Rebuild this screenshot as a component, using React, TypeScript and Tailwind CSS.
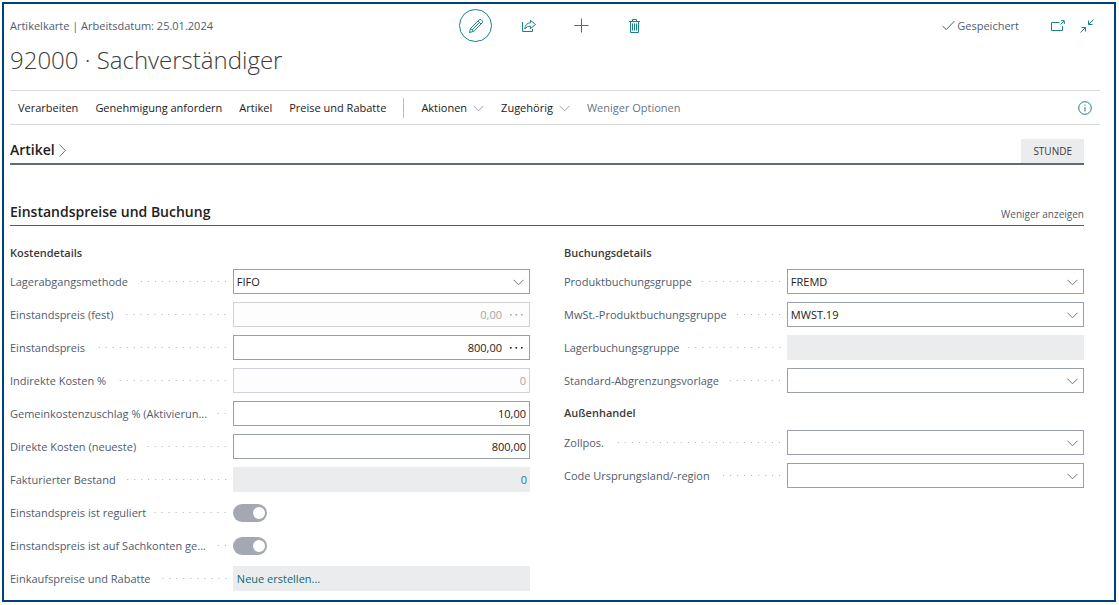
import type { ReactNode } from "react";

type Variant = "edit" | "disabled" | "readonly";

function ChevronDown({ className = "" }: { className?: string }) {
  return (
    <svg
      className={className}
      width="11"
      height="7"
      viewBox="0 0 11 7"
      fill="none"
      stroke="currentColor"
      aria-hidden="true"
    >
      <path d="M0.5 0.8 5.5 5.8 10.5 0.8" />
    </svg>
  );
}

function IconButton({
  label,
  round = false,
  children,
}: {
  label: string;
  round?: boolean;
  children: ReactNode;
}) {
  return (
    <button
      type="button"
      aria-label={label}
      className={
        round
          ? "flex size-[33px] items-center justify-center rounded-full border border-[#1b8085]"
          : "flex size-[33px] items-center justify-center"
      }
    >
      {children}
    </button>
  );
}

function Row({
  id,
  label,
  children,
}: {
  id: string;
  label: string;
  children: ReactNode;
}) {
  return (
    <div className="grid h-[25px] grid-cols-[3fr_4fr] items-center">
      <div className="flex min-w-0 items-center pr-1">
        <label htmlFor={id} className="whitespace-nowrap pr-2 text-[#505c6d]">
          {label}
        </label>
        <span className="h-px flex-1 bg-[linear-gradient(to_right,transparent_3px,#a8aeb8_3px,#a8aeb8_4px,transparent_4px)] bg-[length:7px_1px] bg-right bg-repeat-x" />
      </div>
      {children}
    </div>
  );
}

const boxStyles: Record<Variant, string> = {
  edit: "border border-[#9a9fac] bg-white text-[#212121]",
  disabled: "border border-[#cfd2d8] bg-[#fdfdfd] text-[#a6a6a6]",
  readonly: "bg-[#ebecee] text-[#1b8085]",
};

function ValueField({
  id,
  label,
  value,
  variant = "edit",
  assist = false,
}: {
  id: string;
  label: string;
  value: string;
  variant?: Variant;
  assist?: boolean;
}) {
  return (
    <Row id={id} label={label}>
      <div className={`flex h-full items-center ${boxStyles[variant]}`}>
        <input
          id={id}
          defaultValue={value}
          disabled={variant === "disabled"}
          readOnly={variant === "readonly"}
          className="h-full w-full min-w-0 flex-1 bg-transparent px-[3px] text-right outline-none"
        />
        {assist && (
          <button
            type="button"
            aria-label={`${label} bearbeiten`}
            disabled={variant === "disabled"}
            className="flex h-full w-6 items-center justify-center pr-0.5"
          >
            <svg width="13" height="2" viewBox="0 0 13 2" fill="currentColor" aria-hidden="true">
              <rect x="0" width="1.6" height="1.6" />
              <rect x="5.5" width="1.6" height="1.6" />
              <rect x="11" width="1.6" height="1.6" />
            </svg>
          </button>
        )}
      </div>
    </Row>
  );
}

function SelectField({ id, label, value = "" }: { id: string; label: string; value?: string }) {
  return (
    <Row id={id} label={label}>
      <div className="relative h-full">
        <select
          id={id}
          defaultValue={value}
          className="h-full w-full appearance-none border border-[#9a9fac] bg-white px-[3px] text-[#212121] outline-none"
        >
          <option value={value}>{value}</option>
        </select>
        <ChevronDown className="pointer-events-none absolute top-[10px] right-[6px] text-[#73767e]" />
      </div>
    </Row>
  );
}

function ToggleField({ id, label }: { id: string; label: string }) {
  return (
    <Row id={id} label={label}>
      <div className="relative h-[18px] w-[34px]">
        <input
          id={id}
          type="checkbox"
          role="switch"
          defaultChecked
          disabled
          className="peer size-full appearance-none rounded-full bg-[#a3a8b3]"
        />
        <span className="pointer-events-none absolute top-[3px] left-[3px] size-3 rounded-full bg-white peer-checked:left-5" />
      </div>
    </Row>
  );
}

function PageHeader() {
  return (
    <header>
      <div className="grid grid-cols-[1fr_auto_1fr] items-center pt-[5px]">
        <p className="text-[#505c6d]">Artikelkarte | Arbeitsdatum: 25.01.2024</p>

        <div className="flex gap-5 text-[#1b8085]">
          <IconButton label="Bearbeiten" round>
            <svg width="16" height="16" viewBox="0 0 16 16" fill="none" stroke="currentColor">
              <path d="M1.5 14.5 2.6 10.4 11.2 1.8Q12.2.8 13.3 1.8L14.2 2.7Q15.2 3.8 14.2 4.8L5.6 13.4ZM2.6 10.4 5.6 13.4M10 3 13 6M4.1 11.9 11.5 4.5" />
            </svg>
          </IconButton>
          <IconButton label="Teilen">
            <svg width="16" height="16" viewBox="0 0 16 16" fill="none" stroke="currentColor">
              <path d="M1.5 4V13.5H11.5V11" />
              <path d="M9.5 2.3 14.5 6.5 9.5 10.5V8.2C7 8.2 5.3 9 3.8 11 4 7.5 6 4.9 9.5 4.7Z" />
            </svg>
          </IconButton>
          <IconButton label="Neu">
            <svg width="15" height="15" viewBox="0 0 15 15" fill="none" stroke="currentColor">
              <path d="M7.5 0.5V14.5M0.5 7.5H14.5" />
            </svg>
          </IconButton>
          <IconButton label="Löschen">
            <svg width="13" height="16" viewBox="0 0 13 16" fill="none" stroke="currentColor">
              <path d="M1 3.5H12M4.5 3.5V1.5H8.5V3.5M2.5 3.5V14.5H10.5V3.5M4.5 5.5V12.5M6.5 5.5V12.5M8.5 5.5V12.5" />
            </svg>
          </IconButton>
        </div>

        <div className="flex items-center justify-end pr-1.5 text-[#1b8085]">
          <span className="flex items-center gap-0.5 text-[#505c6d]">
            <svg width="13" height="11" viewBox="0 0 13 11" fill="none" stroke="currentColor" aria-hidden="true">
              <path d="M0.5 6 4.3 9.5 12.5 1" />
            </svg>
            Gespeichert
          </span>
          <button type="button" aria-label="In neuem Fenster öffnen" className="ml-8">
            <svg width="14" height="12" viewBox="0 0 14 12" fill="none" stroke="currentColor">
              <path d="M8.5 2.5H0.5V10.5H11.5V6M9.5 4.5 13 1M10 0.7H13.3V4" />
            </svg>
          </button>
          <button type="button" aria-label="Verkleinern" className="ml-[15px]">
            <svg width="14" height="14" viewBox="0 0 14 14" fill="none" stroke="currentColor">
              <path d="M13.5 0.5 8.5 5.5M8.5 1.5V5.5H12.5M0.5 13.5 5.5 8.5M1.5 8.5H5.5V12.5" />
            </svg>
          </button>
        </div>
      </div>
      <h1 className="pb-3 text-[24px] leading-9 font-light text-[#3b3b3b]">
        92000 · Sachverständiger
      </h1>
    </header>
  );
}

function ActionBar() {
  return (
    <nav className="flex h-[35px] items-center gap-[17px] border-y border-[#d8dade] px-2 pt-px text-[#212121]">
      <button type="button">Verarbeiten</button>
      <button type="button">Genehmigung anfordern</button>
      <button type="button">Artikel</button>
      <button type="button">Preise und Rabatte</button>
      <span className="h-5 w-px bg-[#b6bac2]" />
      <button type="button" className="flex items-center gap-1.5">
        Aktionen <ChevronDown className="text-[#9a9fac]" />
      </button>
      <button type="button" className="flex items-center gap-1.5">
        Zugehörig <ChevronDown className="text-[#9a9fac]" />
      </button>
      <button type="button" className="text-[#6a7485]">
        Weniger Optionen
      </button>
      <button type="button" aria-label="Info" className="ml-auto text-[#1b8085]">
        <svg width="14" height="14" viewBox="0 0 14 14" fill="none" stroke="currentColor">
          <circle cx="7" cy="7" r="6.3" />
          <path d="M7 6V10.5M7 3.5V4.7" />
        </svg>
      </button>
    </nav>
  );
}

export default function App() {
  return (
    <div className="bg-white p-[2px] pr-[3px] font-['Open_Sans','Noto_Sans',sans-serif] text-[11px] leading-4">
      <div className="border-2 border-[#00437a] pr-[14px] pb-[9px] pl-[6px]">
        <PageHeader />
        <ActionBar />

        <main className="pr-4">
          <div className="flex h-10 items-end justify-between border-b-2 border-[#5f6b7c]">
            <h2 className="pb-[3px] text-[14px] leading-5 font-semibold text-[#212121]">
              <button type="button" className="flex items-center gap-1">
                Artikel
                <svg width="7" height="13" viewBox="0 0 7 13" fill="none" stroke="#73767e" aria-hidden="true">
                  <path d="M0.5 0.5 6.3 6.5 0.5 12.5" />
                </svg>
              </button>
            </h2>
            <button type="button" className="h-6 bg-[#ebecee] px-3 text-[10px] text-[#3b3b3b]">
              STUNDE
            </button>
          </div>

          <section>
            <div className="flex h-[61px] items-end justify-between border-b border-[#505c6d] pb-[3px]">
              <h2 className="text-[14px] leading-5 font-semibold text-[#212121]">
                Einstandspreise und Buchung
              </h2>
              <button type="button" className="text-[10px] text-[#505c6d]">
                Weniger anzeigen
              </button>
            </div>

            <div className="grid grid-cols-2 gap-[34px] pt-[19px]">
              <div className="flex flex-col gap-2">
                <h3 className="font-semibold text-[#3b3b3b]">Kostendetails</h3>
                <SelectField id="lagerabgang" label="Lagerabgangsmethode" value="FIFO" />
                <ValueField id="preis-fest" label="Einstandspreis (fest)" value="0,00" variant="disabled" assist />
                <ValueField id="preis" label="Einstandspreis" value="800,00" assist />
                <ValueField id="indirekt" label="Indirekte Kosten %" value="0" variant="disabled" />
                <ValueField id="gemein" label="Gemeinkostenzuschlag % (Aktivierun..." value="10,00" />
                <ValueField id="direkt" label="Direkte Kosten (neueste)" value="800,00" />
                <ValueField id="bestand" label="Fakturierter Bestand" value="0" variant="readonly" />
                <ToggleField id="reguliert" label="Einstandspreis ist reguliert" />
                <ToggleField id="sachkonten" label="Einstandspreis ist auf Sachkonten ge..." />
                <Row id="rabatte" label="Einkaufspreise und Rabatte">
                  <button
                    id="rabatte"
                    type="button"
                    className="h-full bg-[#ebecee] px-1 text-left text-[#0f6a6f]"
                  >
                    Neue erstellen...
                  </button>
                </Row>
              </div>

              <div className="flex flex-col gap-2">
                <h3 className="font-semibold text-[#3b3b3b]">Buchungsdetails</h3>
                <SelectField id="produktgruppe" label="Produktbuchungsgruppe" value="FREMD" />
                <SelectField id="mwstgruppe" label="MwSt.-Produktbuchungsgruppe" value="MWST.19" />
                <ValueField id="lagergruppe" label="Lagerbuchungsgruppe" value="" variant="readonly" />
                <SelectField id="abgrenzung" label="Standard-Abgrenzungsvorlage" />
                <h3 className="pt-1 pb-px font-semibold text-[#3b3b3b]">Außenhandel</h3>
                <SelectField id="zollpos" label="Zollpos." />
                <SelectField id="ursprung" label="Code Ursprungsland/-region" />
              </div>
            </div>
          </section>
        </main>
      </div>
    </div>
  );
}
